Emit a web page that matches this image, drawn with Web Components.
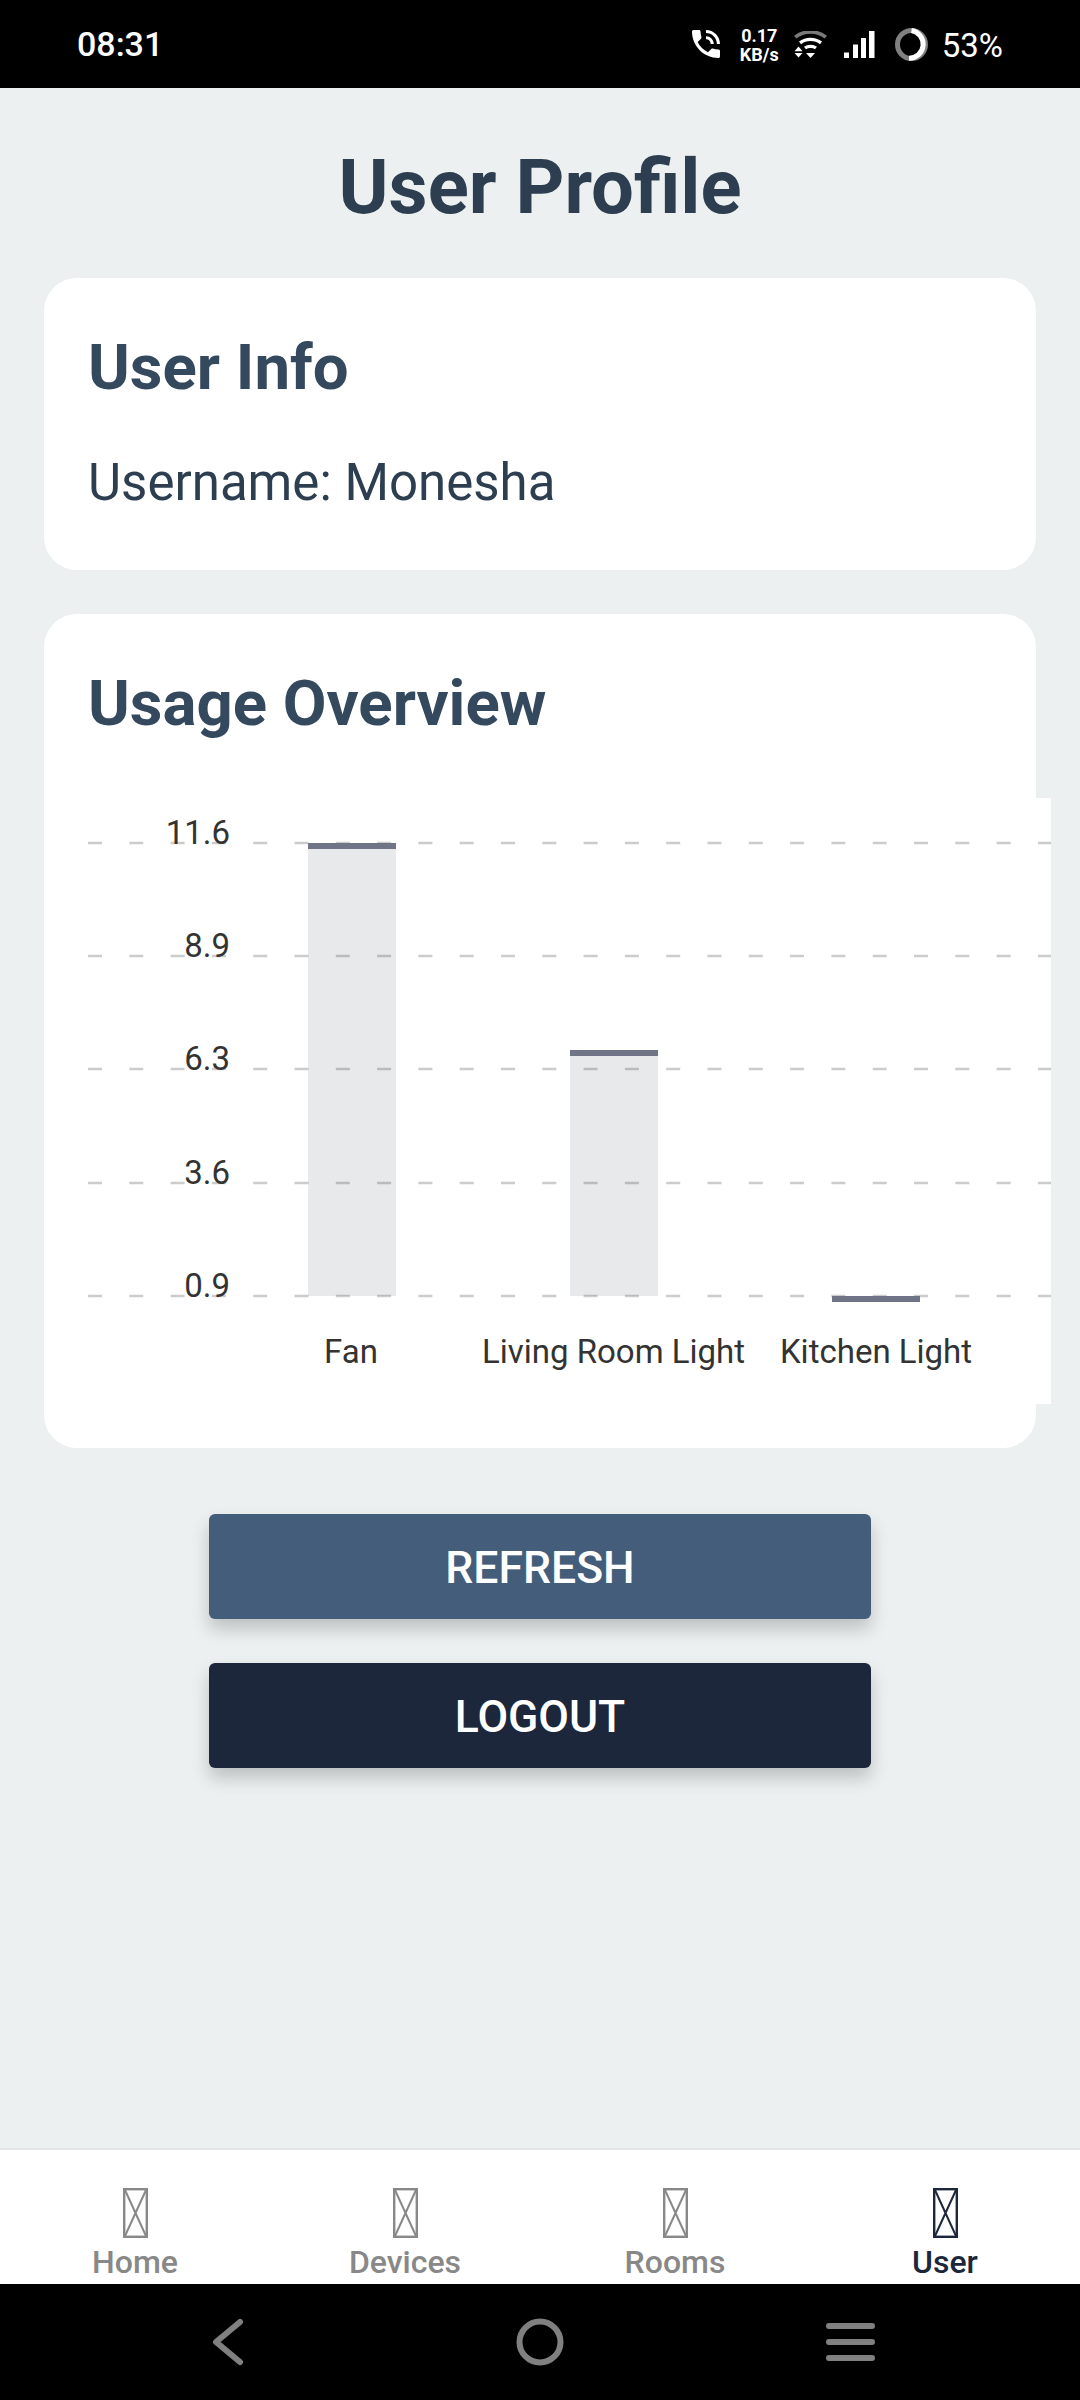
<!DOCTYPE html>
<html>
<head>
<meta charset="utf-8">
<style>
    html, body { margin: 0; padding: 0; }
    body { width: 1080px; height: 2400px; font-family: Roboto, "Liberation Sans", sans-serif; background: #ecf0f1; overflow: hidden; }
    #app { display: flex; flex-direction: column; height: 2400px; }
</style>
</head>
<body>
<div id="app">
    <status-bar></status-bar>
    <profile-page>
        <info-card heading="User Info"><p class="line">Username: Monesha</p></info-card>
        <info-card heading="Usage Overview"><usage-chart></usage-chart></info-card>
        <action-button slot="actions" color="#445d7b">REFRESH</action-button>
        <action-button slot="actions" color="#1c273c">LOGOUT</action-button>
    </profile-page>
    <tab-bar>
        <tab-item>Home</tab-item>
        <tab-item>Devices</tab-item>
        <tab-item>Rooms</tab-item>
        <tab-item active>User</tab-item>
    </tab-bar>
    <system-nav></system-nav>
</div>
<script>
class StatusBar extends HTMLElement {
    constructor() {
        super();
        this.attachShadow({ mode: "open" });
        this.shadowRoot.innerHTML = `
            <style>
                :host { display: flex; flex: none; height: 88px; background: #000; color: #fff; align-items: center; box-sizing: border-box; padding: 0 77px; }
                .time { font-size: 34px; font-weight: 500; flex: 1; }
                .icons { display: flex; align-items: center; }
                svg { display: block; flex: none; }
                .speed { font-size: 18px; font-weight: 700; line-height: 19px; text-align: center; margin: 0 15px 0 20px; width: 39px; padding-top: 2px; white-space: nowrap; }
                .pct { font-size: 33px; margin-left: 14px; padding-top: 3px; }
            </style>
            <span class="time">08:31</span>
            <div class="icons">
                <svg width="28" height="28" viewBox="3 3 18 18">
                    <path fill="#fff" d="M20 15.5c-1.25 0-2.45-.2-3.57-.57-.35-.11-.74-.03-1.02.24l-2.2 2.2c-2.83-1.44-5.15-3.75-6.59-6.59l2.2-2.21c.28-.26.36-.65.25-1C8.7 6.45 8.5 5.25 8.5 4c0-.55-.45-1-1-1H4c-.55 0-1 .45-1 1 0 9.39 7.61 17 17 17 .55 0 1-.45 1-1v-3.5c0-.55-.45-1-1-1zM19 12h2c0-4.97-4.03-9-9-9v2c3.87 0 7 3.13 7 7zm-4 0h2c0-2.76-2.24-5-5-5v2c1.66 0 3 1.34 3 3z"/>
                </svg>
                <div class="speed">0.17<br>KB/s</div>
                <svg width="33" height="27" viewBox="0 0 33 27">
                    <path fill="none" stroke="#7a7a7a" stroke-width="3.6" d="M1.2 6.2 C10 -0.8 23 -0.8 31.8 6.2"/>
                    <path fill="none" stroke="#fff" stroke-width="3.4" d="M6 11.8 C12 7.2 21 7.2 27 11.8 M11 17 C14 14.8 19 14.8 22 17"/>
                    <path fill="#fff" d="M4.5 15.5 L8.5 20.3 L0.5 20.3 Z M0.5 22 L8.5 22 L4.5 26.5 Z M12 22 L21 22 L16.5 27 Z"/>
                </svg>
                <svg width="31" height="27" viewBox="0 0 31 27" style="margin-left:17px">
                    <path fill="#fff" d="M0 21.5 H5 V27 H0 Z M9 13.5 H14 V27 H9 Z M17 7 H22 V27 H17 Z M25 0 H30.5 V27 H25 Z"/>
                </svg>
                <svg width="33" height="33" viewBox="0 0 33 33" style="margin-left:20px">
                    <circle cx="16.5" cy="16.5" r="14" fill="none" stroke="#808080" stroke-width="5"/>
                    <path fill="none" stroke="#fff" stroke-width="5" d="M16.5 2.5 A14 14 0 0 1 14 30.3"/>
                </svg>
                <span class="pct">53%</span>
            </div>
        `;
    }
}
customElements.define("status-bar", StatusBar);

class ProfilePage extends HTMLElement {
    constructor() {
        super();
        this.attachShadow({ mode: "open" });
        this.shadowRoot.innerHTML = `
            <style>
                :host { display: flex; flex-direction: column; flex: 1; min-height: 0; padding: 0 44px; }
                h1 { margin: 0; height: 190px; box-sizing: border-box; padding-top: 8px; display: flex; align-items: center; justify-content: center; font-size: 76px; font-weight: 700; color: #2c3e50; }
                .cards { display: flex; flex-direction: column; gap: 44px; }
                .actions { display: flex; flex-direction: column; align-items: center; gap: 44px; margin-top: 66px; }
            </style>
            <h1>User Profile</h1>
            <div class="cards"><slot></slot></div>
            <div class="actions"><slot name="actions"></slot></div>
        `;
    }
}
customElements.define("profile-page", ProfilePage);

class InfoCard extends HTMLElement {
    constructor() {
        super();
        this.attachShadow({ mode: "open" });
        this.shadowRoot.innerHTML = `
            <style>
                :host { display: block; background: #fff; border-radius: 33px; padding: 45px 44px 44px; box-sizing: border-box; color: #2c3e50; }
                h2 { margin: 0 0 39px; font-size: 63.5px; line-height: 90px; font-weight: 700; color: #34495e; }
                ::slotted(.line) { margin: 0 0 14px; font-size: 51px; line-height: 60px; color: #2c3e50; position: relative; top: 1px; }
            </style>
            <h2>${this.getAttribute("heading")}</h2>
            <slot></slot>
        `;
    }
}
customElements.define("info-card", InfoCard);

class UsageChart extends HTMLElement {
    constructor() {
        super();
        this.attachShadow({ mode: "open" });
        var rows = [["11.6", 45], ["8.9", 158], ["6.3", 271], ["3.6", 385], ["0.9", 498]];
        var bars = [
            { name: "Fan", x: 220, labelX: 263, top: 45, bottom: 498 },
            { name: "Living Room Light", x: 482, labelX: 525.5, top: 252, bottom: 498 },
            { name: "Kitchen Light", x: 744, labelX: 788, top: 498, bottom: 498 }
        ];
        var grid = rows.map(r => `<line x1="0" x2="963" y1="${r[1]}" y2="${r[1]}" stroke="#cccccc" stroke-width="2.5" stroke-dasharray="14 27.3"/>`).join("");
        var ticks = rows.map(r => `<text x="142" y="${r[1] + 0.5}" text-anchor="end">${r[0]}</text>`).join("");
        var cols = bars.map(b => `
            <rect x="${b.x}" y="${b.top}" width="88" height="${b.bottom - b.top}" fill="#1c273c" fill-opacity="0.1"/>
            <rect x="${b.x}" y="${b.top}" width="88" height="6" fill="#6f7586"/>
            <text x="${b.labelX}" y="565" text-anchor="middle">${b.name}</text>`).join("");
        this.shadowRoot.innerHTML = `
            <style>
                :host { display: block; width: 963px; height: 606px; background: #fff; margin-top: 49px; }
                svg { display: block; }
                text { font-size: 33px; fill: #333; font-family: Roboto, "Liberation Sans", sans-serif; }
            </style>
            <svg width="963" height="606" viewBox="0 0 963 606">${grid}${cols}${ticks}</svg>
        `;
    }
}
customElements.define("usage-chart", UsageChart);

class ActionButton extends HTMLElement {
    constructor() {
        super();
        this.attachShadow({ mode: "open" });
        this.shadowRoot.innerHTML = `
            <style>
                :host { display: flex; align-items: center; justify-content: center; width: 662px; height: 105px; box-sizing: border-box; padding-top: 3px; border-radius: 6px; background: ${this.getAttribute("color")}; color: #fff; font-size: 44.5px; font-weight: 500; box-shadow: 0 10px 18px rgba(0,0,0,0.2); }
            </style>
            <slot></slot>
        `;
    }
}
customElements.define("action-button", ActionButton);

class TabBar extends HTMLElement {
    constructor() {
        super();
        this.attachShadow({ mode: "open" });
        this.shadowRoot.innerHTML = `
            <style>
                :host { display: grid; grid-template-columns: repeat(4, 1fr); flex: none; height: 136px; box-sizing: border-box; background: #fff; border-top: 2px solid #e3e6e7; }
            </style>
            <slot></slot>
        `;
    }
}
customElements.define("tab-bar", TabBar);

class TabItem extends HTMLElement {
    constructor() {
        super();
        this.attachShadow({ mode: "open" });
        var color = this.hasAttribute("active") ? "#1c273c" : "#888888";
        this.shadowRoot.innerHTML = `
            <style>
                :host { display: flex; flex-direction: column; align-items: center; padding-top: 38px; color: ${color}; font-size: 32px; font-weight: 500; line-height: 38px; }
                svg { display: block; margin-bottom: 5px; }
            </style>
            <svg width="25" height="50" viewBox="0 0 25 50" fill="none" stroke="${color}" stroke-width="2">
                <rect x="1.2" y="1.2" width="22.6" height="47.6" stroke-width="2.4"/>
                <path d="M2 2 L23 48 M23 2 L2 48"/>
            </svg>
            <slot></slot>
        `;
    }
}
customElements.define("tab-item", TabItem);

class SystemNav extends HTMLElement {
    constructor() {
        super();
        this.attachShadow({ mode: "open" });
        this.shadowRoot.innerHTML = `
            <style>
                :host { display: block; flex: none; height: 116px; background: #000; }
                svg { display: block; }
            </style>
            <svg width="1080" height="116" viewBox="0 0 1080 116" fill="none" stroke="#808080" stroke-linecap="round">
                <path stroke-width="6" stroke-linejoin="round" d="M240 38 L216 58 L240 78"/>
                <circle cx="540" cy="58" r="20.5" stroke-width="6"/>
                <path stroke-width="6" d="M829 42 H872 M829 58 H872 M829 74 H872"/>
            </svg>
        `;
    }
}
customElements.define("system-nav", SystemNav);
</script>
</body>
</html>
